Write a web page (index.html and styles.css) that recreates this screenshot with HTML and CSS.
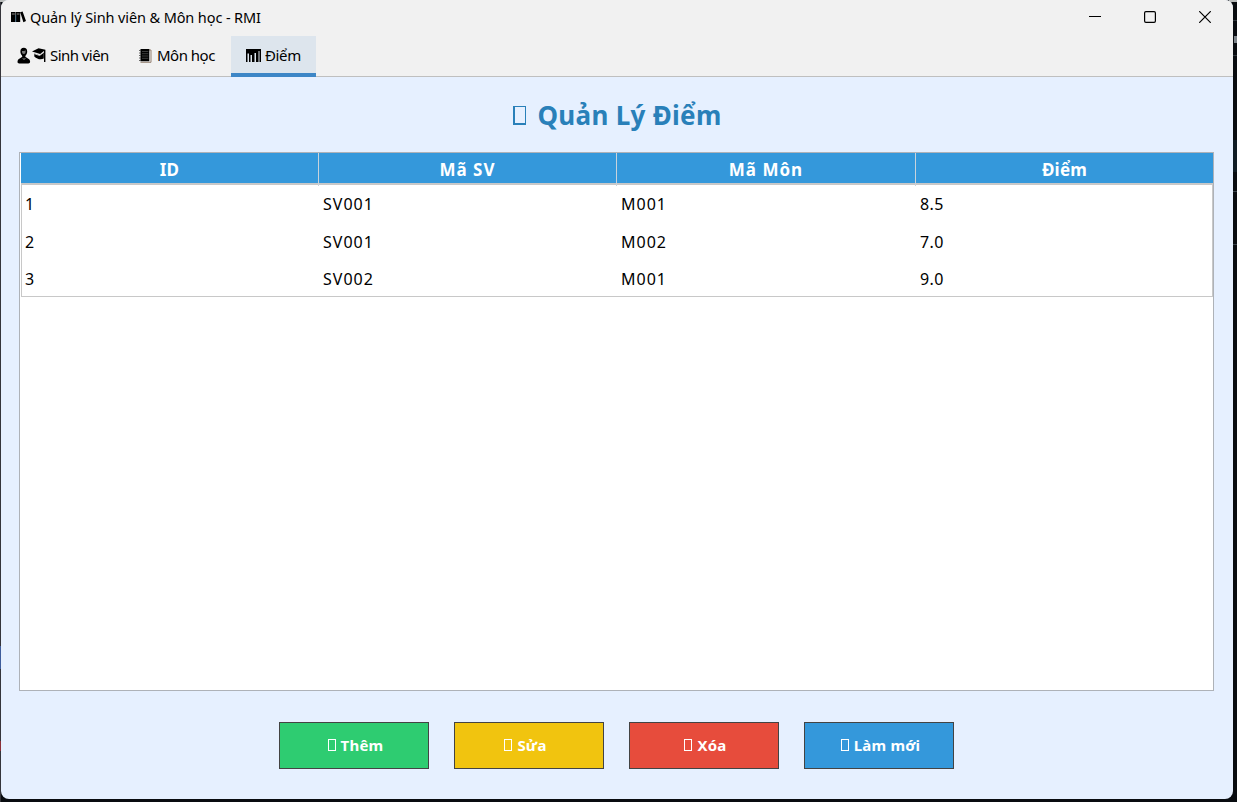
FILE: index.html
```
<!DOCTYPE html>
<html lang="vi">
<head>
<meta charset="utf-8">
<title>Quản lý Sinh viên &amp; Môn học - RMI</title>
<link rel="stylesheet" href="styles.css">
</head>
<body>
<div class="desktop">
  <main class="window">
    <header class="titlebar">
      <svg class="app-icon" width="15" height="12" viewBox="0 0 15 12"><path d="M0 1h4.600v10H0zM5 1h4.200v10H5zM9.200 1.300l2.400-.8L15 10l-2.600 1.200z" fill="#000"/><path d="M.8 3h3M5.700 3h2.800" stroke="#aaa" stroke-width=".8"/><path d="M4.800 4v7" stroke="#2e6d96" stroke-width=".6"/></svg>
      <span class="caption">Quản lý Sinh viên &amp; Môn học - RMI</span>
      <div class="controls">
        <svg width="12" height="12" viewBox="0 0 12 12"><path d="M0 5.500h12" stroke="#000"/></svg>
        <svg width="12" height="12" viewBox="0 0 12 12"><rect x=".6" y=".6" width="10.800" height="10.800" rx="1.300" fill="none" stroke="#000" stroke-width="1.200"/></svg>
        <svg width="12" height="12" viewBox="0 0 12 12"><path d="M.2.2l11.600 11.600M11.800.2L.2 11.800" stroke="#000" stroke-width="1.200"/></svg>
      </div>
    </header>
    <nav class="tabs">
      <div class="tab tab-students">
        <svg width="29" height="17" viewBox="0 0 29 17"><path d="M3.400 4.500C3.400 2 4.600.8 6.800.8s3.400 1.200 3.400 3.700c0 1.800-.6 3-1.600 4l-.3 1.200 3.400 2.200c1 .6 1.500 1.900 1.400 3.200-.1.900-.8 1.300-1.700 1.300H2.200C1.200 16.400.5 16 .5 15.100c0-1.400.4-2.600 1.400-3.200l3.400-2.200L5 8.500C4 7.500 3.400 6.300 3.400 4.500z" fill="#000"/><path d="M5 4c1.200.2 2.600-.1 3.600-.8v1.600c0 1.300-.8 2.300-1.800 2.300S5 6.100 5 4.800z" fill="#777"/><path d="M5.800 11.200l1.200 1.400 1.400-1.600" fill="none" stroke="#999" stroke-width=".9"/><path d="M15 4.500L21.500 1.200l7 1.600-5.300 4.200z" fill="#000"/><path d="M17.300 6.600l5.500 2 4-3v5.800c-3 1.600-6.500.8-9.500-2z" fill="#000"/><path d="M27.700 3v12" stroke="#000" stroke-width="1.400"/><path d="M17.300 6.700l5.200 1.800 3.500-2.500" fill="none" stroke="#ccc" stroke-width=".9"/></svg>
        <span>Sinh viên</span>
      </div>
      <div class="tab tab-courses">
        <svg width="13" height="14" viewBox="0 0 13 14"><path d="M2.500 1h9.500v12.300H1.500" fill="#eee" stroke="#8a7563" stroke-width=".9"/><path d="M1.500 0h8.800v12.300H1.500z" fill="#000"/><path d="M3 2.500h6.300M3 4.700h6.300M3 7h6.300M3 9.300h6.300" stroke="#555" stroke-width=".7"/><path d="M0 1.500h2M0 4h2M0 6.500h2M0 9h2M0 11.500h2" stroke="#444" stroke-width=".8"/></svg>
        <span>Môn học</span>
      </div>
      <div class="tab tab-grades active">
        <svg width="16" height="13" viewBox="0 0 16 13"><path d="M1 0h15v13h-1.500V2h-1v11H11V4H9.500v9H7V6H5.500v7H4V4.500H2.500V13H1z" fill="#000"/><path d="M12 2v11" stroke="#000"/></svg>
        <span>Điểm</span>
      </div>
    </nav>
    <section class="panel">
      <h1 class="heading"><i class="glyph"></i><span>Quản Lý Điểm</span></h1>
      <div class="table-box">
        <div class="row head"><div>ID</div><div class="wide">Mã SV</div><div class="wide">Mã Môn</div><div>Điểm</div></div>
        <div class="rows">
          <div class="row"><div>1</div><div>SV001</div><div>M001</div><div>8.5</div></div>
          <div class="row"><div>2</div><div>SV001</div><div>M002</div><div>7.0</div></div>
          <div class="row"><div>3</div><div>SV002</div><div>M001</div><div>9.0</div></div>
        </div>
      </div>
      <div class="actions">
        <button class="btn add"><i class="glyph"></i><span>Thêm</span></button>
        <button class="btn edit"><i class="glyph"></i><span>Sửa</span></button>
        <button class="btn delete"><i class="glyph"></i><span>Xóa</span></button>
        <button class="btn refresh"><i class="glyph"></i><span>Làm mới</span></button>
      </div>
    </section>
  </main>
</div>
</body>
</html>
```
FILE: styles.css
```
* { box-sizing: border-box; }
body { margin: 0; font-family: "Noto Sans", "Open Sans", sans-serif; color: #000; }
.desktop {
  width: 1237px; height: 802px; padding: 0 4px 3px 1px; overflow: hidden;
  background:
    linear-gradient(#b9bcbb, #b9bcbb) 100% 0 / 8px 2px no-repeat,
    linear-gradient(#b9bcbb, #b9bcbb) 0 0 / 8px 2px no-repeat,
    linear-gradient(#30363b, #30363b) 100% 20px / 4px 1px no-repeat,
    linear-gradient(#7c8389, #7c8389) 100% 36px / 3px 7px no-repeat,
    linear-gradient(#30363b, #30363b) 100% 55px / 4px 1px no-repeat,
    linear-gradient(#101c24, #101c24) 100% 140px / 4px 32px no-repeat,
    linear-gradient(#39434a, #39434a) 100% 191px / 4px 1px no-repeat,
    linear-gradient(#39434a, #39434a) 100% 244px / 4px 1px no-repeat,
    linear-gradient(#3f5d9c, #3f5d9c) 0 646px / 1px 23px no-repeat,
    linear-gradient(#8c3038, #8c3038) 0 741px / 1px 10px no-repeat,
    linear-gradient(90deg, #35353b 0 1px, #090c10 1px);
}
.window { width: 1232px; height: 799px; background: #e6f0ff; border-radius: 8px; overflow: hidden; display: flex; flex-direction: column; }
.titlebar { height: 36px; background: #f1f1f1; display: flex; align-items: center; padding: 0 22px 2px 10px; flex: none; }
.app-icon { margin-right: 4px; }
.caption { font-size: 14.5px; letter-spacing: -0.11px; line-height: 20px; white-space: nowrap; }
.controls { margin-left: auto; display: flex; gap: 43px; }
.controls svg, .tab svg { display: block; flex: none; }
.tabs { height: 41px; background: #f1f1f1; border-bottom: 1px solid #bfbfbf; display: flex; flex: none; }
.tab { height: 41px; padding-bottom: 3px; display: flex; align-items: center; gap: 4px; font-size: 15px; letter-spacing: -0.35px; white-space: nowrap; }
.tab-students { width: 123px; padding-left: 16px; letter-spacing: -0.55px; }
.tab-courses { width: 107px; padding-left: 15px; gap: 5px; letter-spacing: -0.5px; }
.tab-courses svg { margin-top: 1px; }
.tab-grades { width: 85px; padding-left: 14px; }
.active { background: #dde5ed; border-bottom: 4px solid #3d86c6; padding-bottom: 0; padding-top: 1px; }
.panel { flex: 1; padding: 20px 19px 0 18px; display: flex; flex-direction: column; }
.heading { margin: 0 0 19px; padding-left: 2px; height: 36px; font-size: 26px; line-height: 36px; letter-spacing: 0.3px; color: #2980b9; display: flex; align-items: center; justify-content: center; gap: 11px; white-space: nowrap; }
.glyph { display: block; width: 8px; height: 11px; border: 1px solid currentColor; flex: none; }
.heading .glyph { width: 13px; height: 19px; border-width: 1px 1px 2px 2px; }
.table-box { height: 539px; width: 1195px; border: 1px solid #aeb2b8; padding-left: 1px; background: #fff; }
.row { display: grid; grid-template-columns: 297px 298px 299px 1fr; }
.head { height: 30px; background: #3498db; color: #fff; font-weight: 700; font-size: 17px; line-height: 33px; text-align: center; letter-spacing: 0.2px; }
.head .wide { letter-spacing: 1px; }
.head div + div { border-left: 1px solid #c8d3dc; }
.rows { border: 1px solid #c8c8c8; border-top: 2px solid #c8c8c8; height: 114px; }
.rows .row { grid-template-columns: 298px 298px 299px 1fr; height: 37.5px; font-size: 16px; line-height: 38px; letter-spacing: 1px; }
.rows .row div { padding-left: 3px; }
.rows .row div:last-child { letter-spacing: 0.4px; }
.actions { margin-top: 31px; display: flex; justify-content: center; gap: 25px; }
.btn { width: 150px; height: 47px; border: 1px solid #434343; padding: 0 0 2px 3px; color: #fff; font: 700 15px/20px "Noto Sans", "Open Sans", sans-serif; letter-spacing: 0.2px; display: flex; align-items: center; justify-content: center; gap: 5px; white-space: nowrap; }
.btn .glyph { height: 12px; }
.add { background: #2ecc71; }
.edit { background: #f1c40f; padding-right: 10px; }
.delete { background: #e74c3c; }
.refresh { background: #3498db; }
```
